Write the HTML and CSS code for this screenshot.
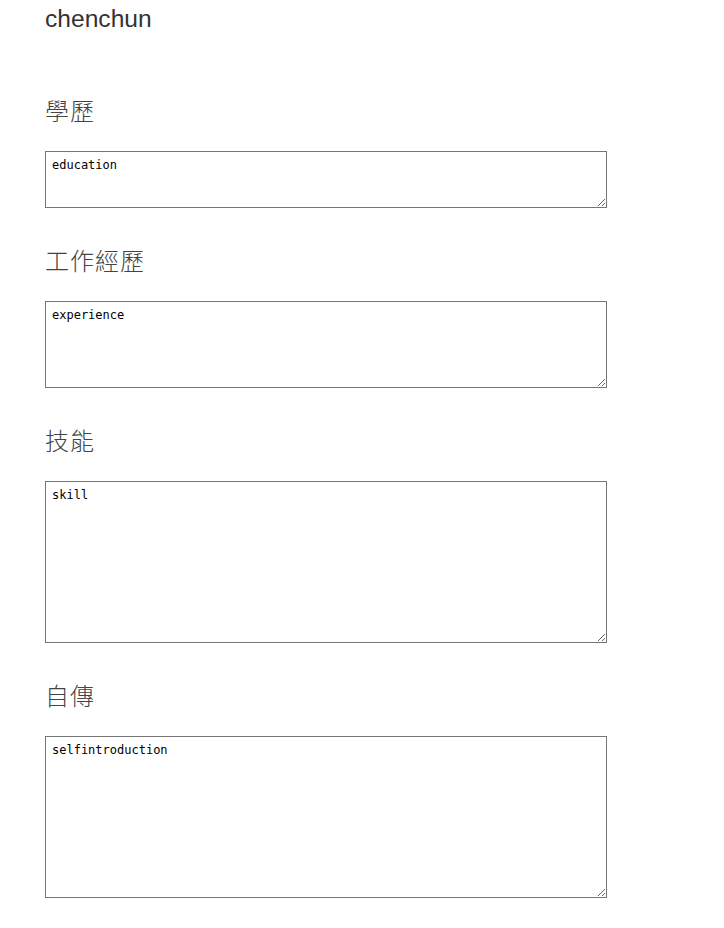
FILE: index.html
```html
<!DOCTYPE html>
<html lang="zh-Hant">
<head>
<meta charset="utf-8">
<title>chenchun</title>
<link rel="stylesheet" href="styles.css">
</head>
<body>
<div class="page">
  <h1 class="name">chenchun</h1>
  <h3 class="section-title">學歷</h3>
  <textarea class="field field-sm">education</textarea>
  <h3 class="section-title">工作經歷</h3>
  <textarea class="field field-md">experience</textarea>
  <h3 class="section-title">技能</h3>
  <textarea class="field field-lg">skill</textarea>
  <h3 class="section-title">自傳</h3>
  <textarea class="field field-lg">selfintroduction</textarea>
</div>
</body>
</html>
```

FILE: styles.css
```css
html, body {
  margin: 0;
  padding: 0;
  background: #fff;
}
body {
  font-family: "Liberation Sans", Arial, "Noto Sans CJK TC", sans-serif;
  color: #333;
}
.page {
  display: flex;
  flex-direction: column;
  align-items: flex-start;
  padding: 6px 0 0 45px;
}
.name {
  margin: 0 0 26px;
  font-size: 24.6px;
  line-height: 26px;
  font-weight: normal;
  color: #333;
}
.section-title {
  margin: 39px 0 28px;
  font-family: "Noto Sans CJK TC", "Liberation Sans", sans-serif;
  font-size: 24px;
  line-height: 26px;
  font-weight: 300;
  letter-spacing: 1px;
  color: #444;
}
.field {
  display: block;
  box-sizing: border-box;
  width: 562px;
  margin: 0;
  padding: 6px 6px;
  border: 1px solid #767676;
  border-radius: 0;
  font-family: "DejaVu Sans Mono", "Liberation Mono", monospace;
  font-size: 12px;
  color: #000;
  background: #fff;
}
.field-sm { height: 57px; }
.field-md { height: 87px; }
.field-lg { height: 162px; }
```
